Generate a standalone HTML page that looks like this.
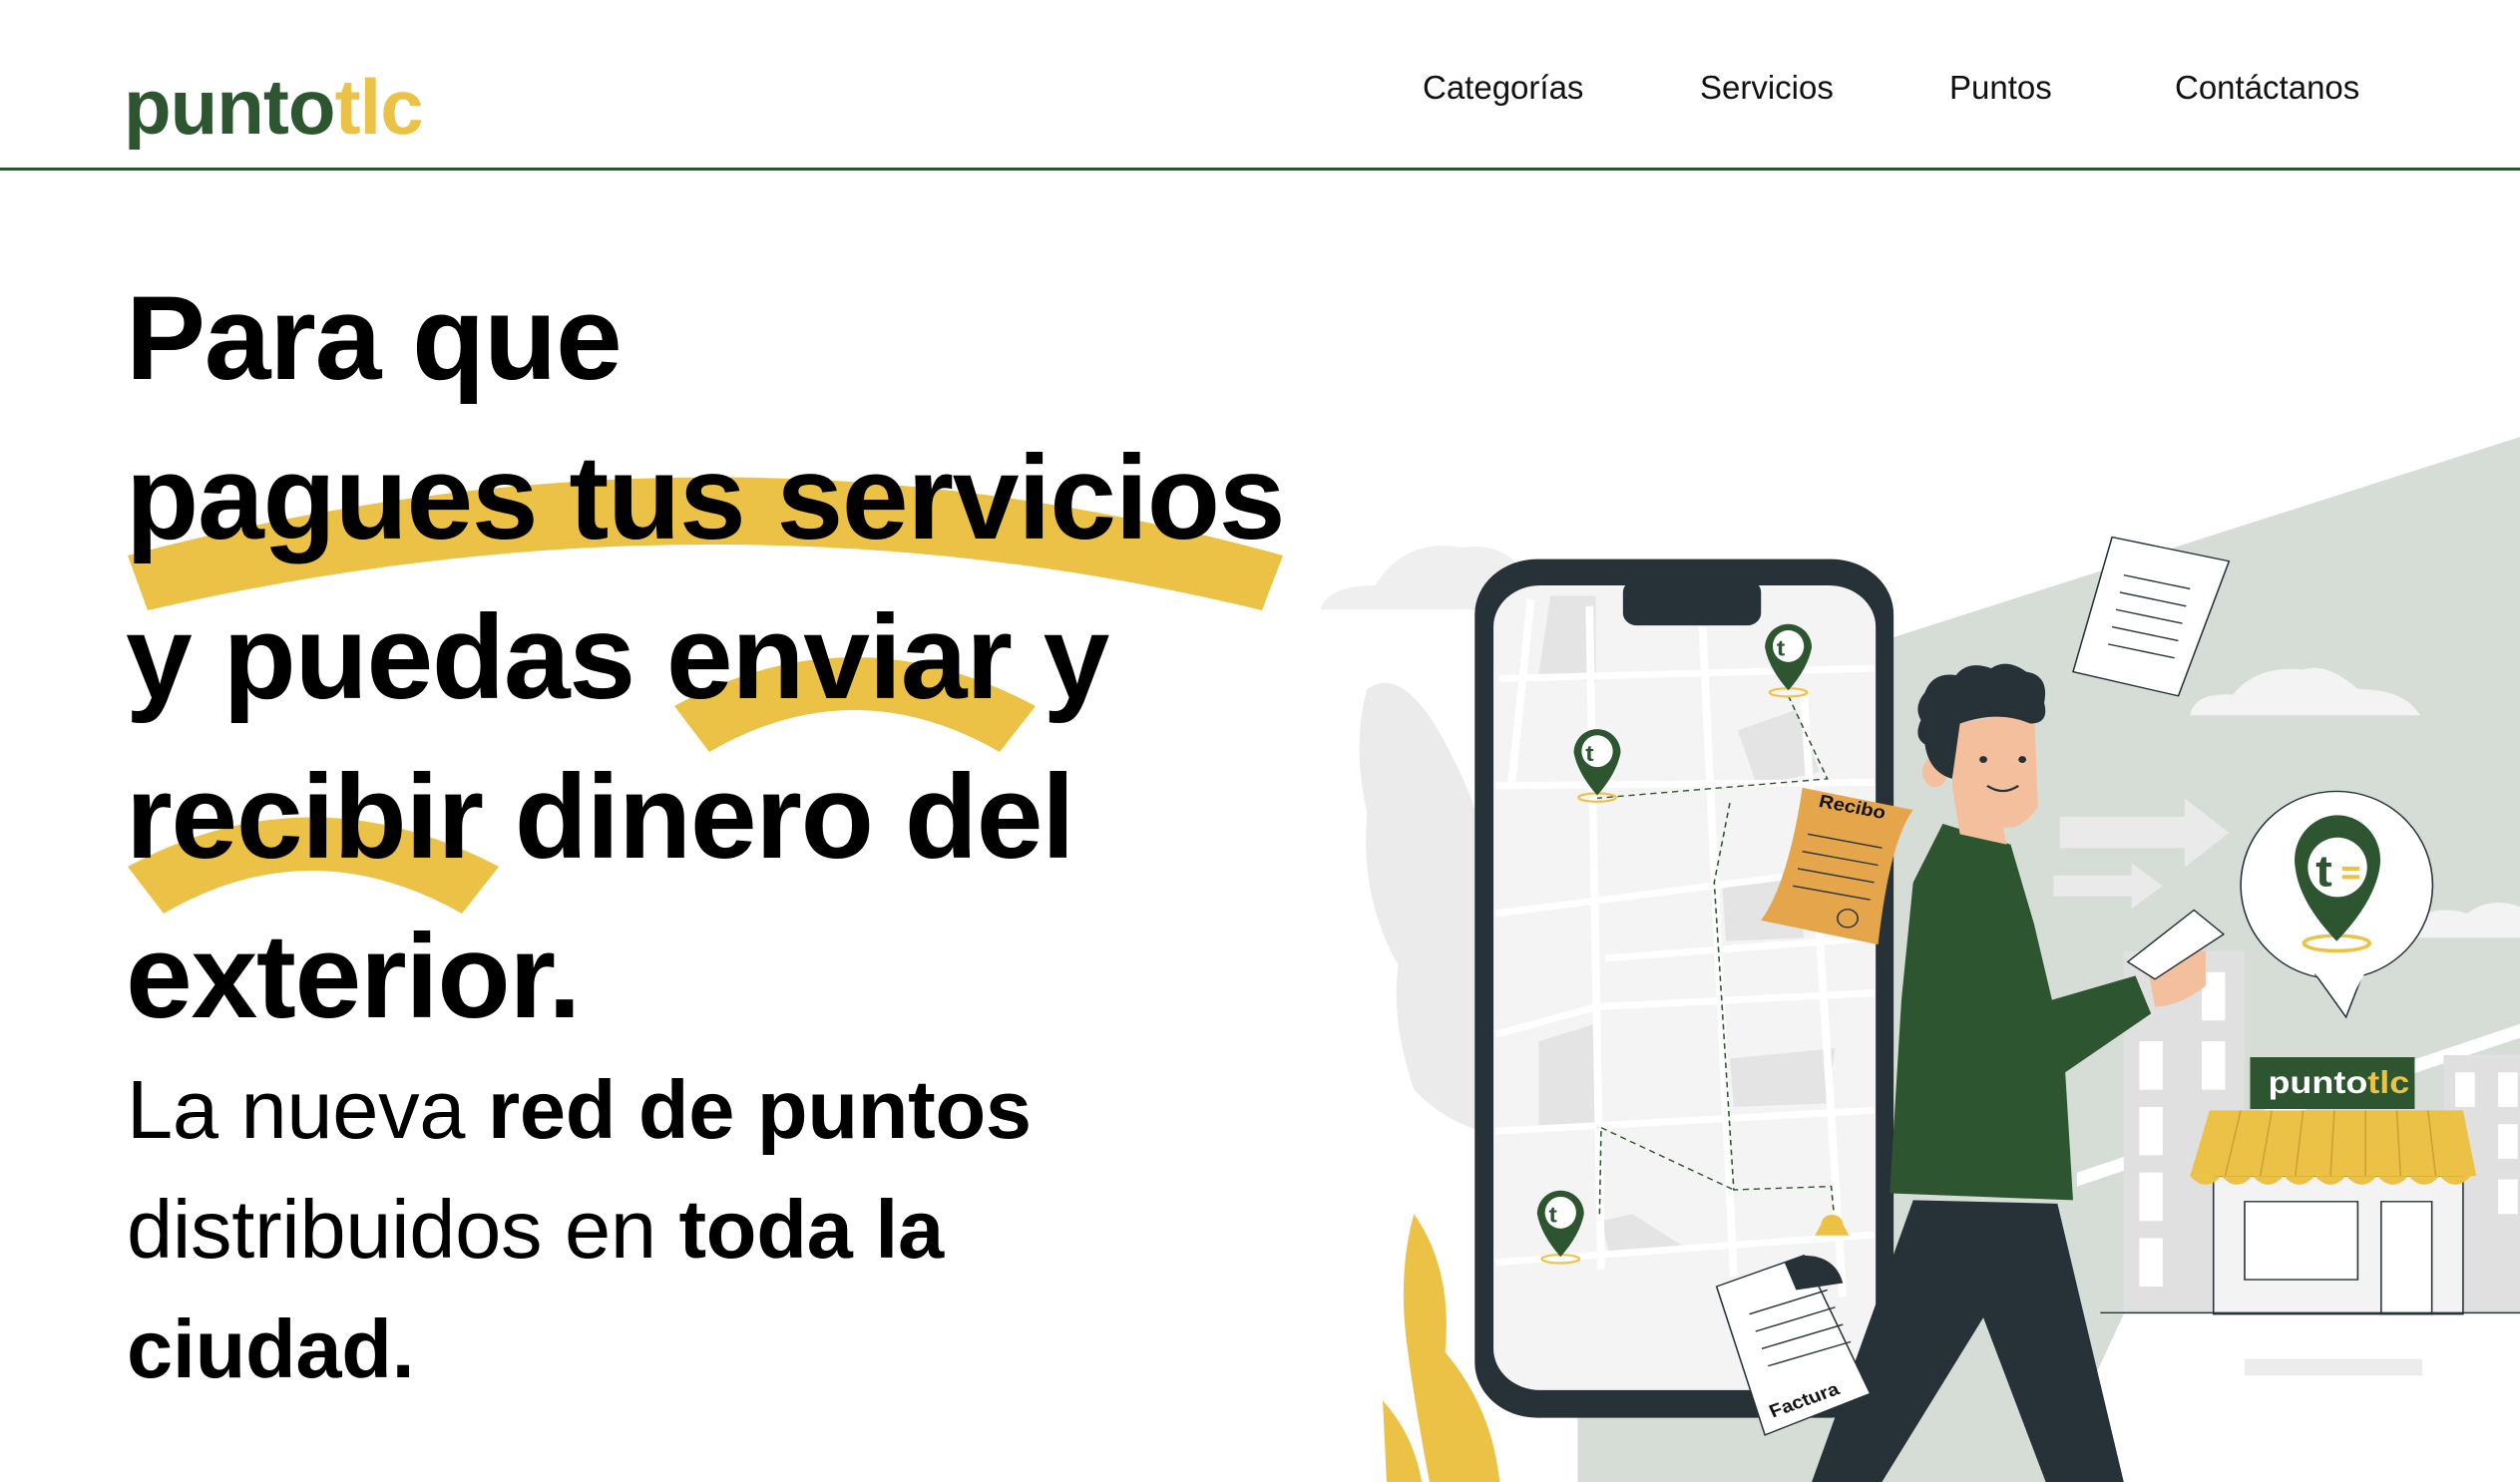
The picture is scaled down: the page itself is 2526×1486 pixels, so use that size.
<!DOCTYPE html>
<html><head><meta charset="utf-8"><style>
*{margin:0;padding:0;box-sizing:border-box}
body{width:2526px;height:1486px;overflow:hidden;background:#fff;font-family:"Liberation Sans",sans-serif;position:relative;color:#000}
.logo{position:absolute;left:124px;top:68px;font-size:78px;font-weight:bold;color:#2c5530;letter-spacing:-1px;line-height:1}
.logo span{color:#ebc246}
.nav a{position:absolute;top:71px;font-size:33px;color:#111;text-decoration:none;line-height:1}
.rule{position:absolute;left:0;top:168px;width:2526px;height:3px;background:#2c5530}
.h{position:absolute;left:126px;font-size:120px;font-weight:bold;letter-spacing:-1.3px;line-height:1;white-space:nowrap}
.s{position:absolute;left:127px;font-size:83px;line-height:1;white-space:nowrap;letter-spacing:-0.3px}
.s b{font-weight:bold}
</style></head><body>
<div class="logo">punto<span>tlc</span></div>
<div class="nav"><a style="left:1426px">Categorías</a><a style="left:1704px">Servicios</a><a style="left:1954px">Puntos</a><a style="left:2180px">Contáctanos</a></div>
<div class="rule"></div>
<svg style="position:absolute;left:0;top:0" width="1400" height="1000">
<path d="M128,557 Q722,400 1286,557 L1265,612 Q722,480 148,612 Z" fill="#ebc246"/>
<path d="M676,708 Q856,610 1038,708 L1002,754 Q856,670 711,754 Z" fill="#ebc246"/>
<path d="M128,869 Q311,770 500,869 L463,916 Q311,830 164,916 Z" fill="#ebc246"/>
</svg>
<div class="h" style="top:279px">Para que</div>
<div class="h" style="top:439px">pagues tus servicios</div>
<div class="h" style="top:599px">y puedas enviar y</div>
<div class="h" style="top:759px">recibir dinero del</div>
<div class="h" style="top:919px">exterior.</div>
<div class="s" style="top:1071px">La nueva <b>red de puntos</b></div>
<div class="s" style="top:1191px">distribuidos en <b>toda la</b></div>
<div class="s" style="top:1311px"><b>ciudad.</b></div>

<svg style="position:absolute;left:1300px;top:400px" width="1226" height="1086" viewBox="0 0 1568 1568" preserveAspectRatio="none">
<polygon points="765,345 1568,55 1568,1325 1060,1325 960,1568 360,1568 360,1470 765,1470" fill="#d6ddd6"/>
<polygon points="1000,1120 1568,905 1568,925 1000,1140" fill="#fff"/>
<path d="M30,305 Q40,270 100,270 Q140,200 210,215 Q270,205 295,260 L295,305 Z" fill="#efefef"/>
<path d="M1145,458 Q1150,425 1200,428 Q1230,385 1290,392 Q1320,380 1360,420 Q1420,420 1440,458 Z" fill="#f3f3f3"/>
<path d="M1420,760 Q1460,730 1500,745 Q1530,720 1568,735 L1568,780 L1420,780 Z" fill="#f3f3f3"/>
<path d="M90,420 Q140,380 200,520 Q260,650 240,760 Q300,880 280,1070 Q200,1060 150,1000 Q120,900 130,820 Q80,720 90,600 Q70,500 90,420 Z" fill="#ebebeb"/>
<polygon points="978,605 1138,605 1138,578 1195,628 1138,678 1138,650 978,650" fill="#eaeaea"/>
<polygon points="970,690 1070,690 1070,672 1110,705 1070,738 1070,720 970,720" fill="#eaeaea"/>
<polygon points="1045,200 1195,235 1130,430 995,395" fill="#fff" stroke="#263238" stroke-width="2"/>
<g stroke="#263238" stroke-width="2"><line x1="1060" y1="255" x2="1145" y2="275"/><line x1="1055" y1="280" x2="1140" y2="300"/><line x1="1050" y1="305" x2="1135" y2="325"/><line x1="1045" y1="330" x2="1130" y2="350"/><line x1="1040" y1="355" x2="1125" y2="375"/></g>
<rect x="1060" y="800" width="155" height="525" fill="#e0e0e0"/>
<rect x="1470" y="950" width="98" height="375" fill="#e0e0e0"/>
<g fill="#fff"><rect x="1080" y="930" width="30" height="70"/><rect x="1160" y="930" width="30" height="70"/><rect x="1080" y="1025" width="30" height="70"/><rect x="1080" y="1120" width="30" height="70"/><rect x="1080" y="1215" width="30" height="70"/><rect x="1160" y="830" width="30" height="70"/><rect x="1485" y="975" width="25" height="50"/><rect x="1540" y="975" width="25" height="50"/><rect x="1540" y="1050" width="25" height="50"/><rect x="1540" y="1130" width="25" height="50"/></g>
<rect x="1175" y="1125" width="320" height="200" fill="#f3f3f3" stroke="#263238" stroke-width="2"/>
<rect x="1215" y="1162" width="145" height="113" fill="#fff" stroke="#263238" stroke-width="2"/>
<rect x="1390" y="1162" width="65" height="163" fill="#fff" stroke="#263238" stroke-width="2"/>
<polygon points="1170,1030 1495,1030 1512,1125 1145,1125" fill="#ebc246"/>
<g stroke="#c9a232" stroke-width="2"><line x1="1210" y1="1030" x2="1190" y2="1125"/><line x1="1250" y1="1030" x2="1235" y2="1125"/><line x1="1290" y1="1030" x2="1280" y2="1125"/><line x1="1330" y1="1030" x2="1325" y2="1125"/><line x1="1370" y1="1030" x2="1370" y2="1125"/><line x1="1410" y1="1030" x2="1415" y2="1125"/><line x1="1450" y1="1030" x2="1460" y2="1125"/></g>
<path d="M1145,1125 q20,25 40,0 q20,25 40,0 q20,25 40,0 q20,25 40,0 q20,25 40,0 q20,25 40,0 q20,25 40,0 q20,25 40,0 q20,25 40,0 z" fill="#ebc246"/>
<rect x="1222" y="953" width="211" height="75" fill="#2c5530"/>
<text x="1245" y="1005" font-family="Liberation Sans" font-weight="bold" font-size="46" fill="#fff">punto<tspan fill="#ebc246">tlc</tspan></text>
<rect x="1215" y="1390" width="228" height="24" fill="#ececec"/>
<line x1="1030" y1="1323" x2="1568" y2="1323" stroke="#263238" stroke-width="2"/>
<ellipse cx="1333" cy="704" rx="123" ry="136" fill="#fff" stroke="#263238" stroke-width="2"/>
<path d="M1305,832 L1345,895 L1368,828" fill="#fff" stroke="#263238" stroke-width="2"/>
<path d="M1300,826 L1372,826 L1345,880 Z" fill="#fff"/>
<ellipse cx="1333" cy="788" rx="42" ry="11" fill="none" stroke="#ebc246" stroke-width="5"/>
<path d="M1280,680 A55,65 0 1 1 1388,680 Q1380,730 1333,785 Q1286,730 1280,680 Z" fill="#2c5530"/>
<ellipse cx="1334" cy="678" rx="38" ry="43" fill="#fff"/>
<text x="1306" y="705" font-family="Liberation Sans" font-weight="bold" font-size="64" fill="#2c5530">t</text>
<g stroke="#ebc246" stroke-width="6"><line x1="1340" y1="680" x2="1362" y2="680"/><line x1="1340" y1="692" x2="1362" y2="692"/></g>
<rect x="228" y="232" width="537" height="1243" rx="80" fill="#263238"/>
<rect x="252" y="270" width="490" height="1165" rx="60" fill="#f4f4f4"/>
<rect x="418" y="262" width="177" height="66" rx="18" fill="#263238"/>
<g fill="#e4e4e4"><polygon points="325,285 383,285 383,410 310,398"/><polygon points="565,480 640,450 670,540 590,560"/><polygon points="545,700 640,690 650,780 550,785"/><polygon points="310,930 382,905 385,1050 310,1060"/><polygon points="555,955 690,940 680,1020 560,1025"/><polygon points="390,1190 430,1180 500,1230 400,1235"/></g>
<g stroke="#fff" stroke-width="10" fill="none"><path d="M260,405 L740,390"/><path d="M255,560 L740,555"/><path d="M255,745 L740,675"/><path d="M385,880 L740,860"/><path d="M255,920 L385,880"/><path d="M255,1060 L740,1030"/><path d="M255,1250 L740,1210"/><path d="M375,300 L390,1260"/><path d="M520,330 L560,1270"/><path d="M650,430 L700,1300"/><path d="M300,290 L275,560"/><path d="M395,810 L740,780"/></g>
<g stroke="#2c5530" stroke-width="2" stroke-dasharray="8,6" fill="none"><path d="M630,430 L680,550 L385,578 M555,585 L535,700 L560,1145 L685,1140 L688,1175 M390,1055 L560,1145 M390,1060 L388,1180"/></g>
<path d="M672,1195 a14,14 0 1 1 28,0 l8,16 l-44,0 z" fill="#ebc246"/>
<g>
<ellipse cx="630" cy="425" rx="24" ry="6" fill="none" stroke="#ebc246" stroke-width="3"/>
<path d="M600,360 A30,34 0 1 1 660,360 Q655,390 630,422 Q605,390 600,360 Z" fill="#2c5530"/>
<ellipse cx="630" cy="358" rx="20" ry="23" fill="#fff"/>
<text x="615" y="372" font-family="Liberation Sans" font-weight="bold" font-size="32" fill="#2c5530">t</text>
<ellipse cx="385" cy="577" rx="24" ry="6" fill="none" stroke="#ebc246" stroke-width="3"/>
<path d="M355,512 A30,34 0 1 1 415,512 Q410,542 385,574 Q360,542 355,512 Z" fill="#2c5530"/>
<ellipse cx="385" cy="510" rx="20" ry="23" fill="#fff"/>
<text x="370" y="524" font-family="Liberation Sans" font-weight="bold" font-size="32" fill="#2c5530">t</text>
<ellipse cx="338" cy="1245" rx="24" ry="6" fill="none" stroke="#ebc246" stroke-width="3"/>
<path d="M308,1180 A30,34 0 1 1 368,1180 Q363,1210 338,1242 Q313,1210 308,1180 Z" fill="#2c5530"/>
<ellipse cx="338" cy="1178" rx="20" ry="23" fill="#fff"/>
<text x="323" y="1192" font-family="Liberation Sans" font-weight="bold" font-size="32" fill="#2c5530">t</text>
</g>
<path d="M648,563 L790,595 Q760,640 745,790 L595,755 Q630,700 648,563 Z" fill="#e5a64b"/>
<text x="668" y="590" font-family="Liberation Sans" font-weight="bold" font-size="26" fill="#111" transform="rotate(12 668 590)">Recibo</text>
<g stroke="#263238" stroke-width="2"><line x1="655" y1="630" x2="750" y2="650"/><line x1="648" y1="655" x2="745" y2="675"/><line x1="642" y1="680" x2="740" y2="700"/><line x1="636" y1="705" x2="735" y2="725"/></g>
<circle cx="706" cy="752" r="13" fill="none" stroke="#263238" stroke-width="2"/>
<path d="M150,1180 Q200,1260 190,1380 Q250,1460 260,1568 L170,1568 Q150,1450 140,1360 Q130,1260 150,1180 Z" fill="#ebc246"/>
<path d="M110,1450 Q150,1500 160,1568 L115,1568 Z" fill="#ebc246"/>
<path d="M790,1160 L975,1165 L1060,1568 L960,1568 L880,1330 L750,1568 L660,1568 Z" fill="#263238"/>
<path d="M828,615 L915,645 L945,760 L968,870 L1075,835 L1095,890 L985,975 L995,1160 L760,1150 L775,870 L790,700 Z" fill="#2c5530"/>
<path d="M845,470 L945,450 L950,590 Q930,625 905,620 L910,645 L850,630 L840,560 Z" fill="#f3bf9c"/>
<ellipse cx="818" cy="540" rx="16" ry="22" fill="#f3bf9c"/>
<path d="M805,425 Q815,395 845,400 Q860,378 890,390 Q910,375 935,395 Q965,400 958,440 Q965,470 940,470 Q900,450 850,470 L840,550 Q810,540 805,500 Q790,490 800,465 Q790,445 805,425 Z" fill="#263238"/>
<circle cx="880" cy="522" r="5" fill="#263238"/><circle cx="930" cy="522" r="5" fill="#263238"/>
<path d="M885,560 Q905,575 925,560" fill="none" stroke="#263238" stroke-width="3"/>
<path d="M1090,820 Q1130,790 1165,800 L1165,850 Q1130,880 1100,880 Z" fill="#f3bf9c"/>
<polygon points="1065,815 1150,740 1188,775 1100,840" fill="#fff" stroke="#263238" stroke-width="2"/>
<polygon points="538,1285 650,1240 735,1440 600,1500" fill="#fff" stroke="#263238" stroke-width="2"/>
<path d="M625,1250 L650,1240 Q690,1240 700,1280 L640,1290 Z" fill="#263238"/>
<g stroke="#263238" stroke-width="2"><line x1="580" y1="1325" x2="680" y2="1290"/><line x1="588" y1="1350" x2="690" y2="1315"/><line x1="596" y1="1375" x2="700" y2="1340"/><line x1="604" y1="1400" x2="710" y2="1365"/></g>
<text x="610" y="1475" font-family="Liberation Sans" font-weight="bold" font-size="26" fill="#111" transform="rotate(-22 610 1475)">Factura</text>
</svg>
</body></html>
